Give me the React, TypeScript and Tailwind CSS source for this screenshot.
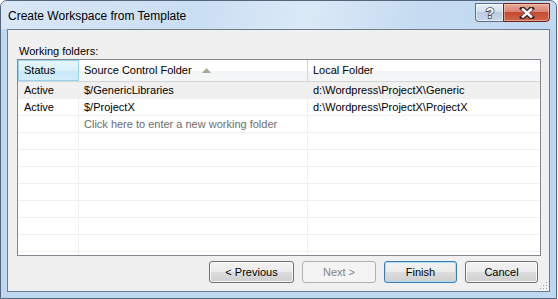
import React from 'react';

type Row = {
  status?: string;
  source?: string;
  local?: string;
  placeholder?: string;
  selected?: boolean;
};

const rows: Row[] = [
  { status: 'Active', source: '$/GenericLibraries', local: 'd:\\Wordpress\\ProjectX\\Generic', selected: true },
  { status: 'Active', source: '$/ProjectX', local: 'd:\\Wordpress\\ProjectX\\ProjectX' },
  { placeholder: 'Click here to enter a new working folder' },
  {},
  {},
  {},
  {},
  {},
  {},
  {},
  {},
];

const HelpButton = () => (
  <div className="w-[28px] h-[19px] rounded-bl-[4px] border border-[#5f6e80] border-r-0 bg-[linear-gradient(#e9eff6_0%,#d3dfec_45%,#b9cbe0_50%,#c9d9ea_100%)] flex items-center justify-center shadow-[inset_0_0_0_1px_rgba(255,255,255,0.55)]">
    <svg width="12" height="14" viewBox="0 0 12 14">
      <text
        x="6"
        y="12"
        textAnchor="middle"
        fontFamily="Liberation Sans, Arial, sans-serif"
        fontWeight="700"
        fontSize="14"
        fill="#ffffff"
        stroke="#3b4756"
        strokeWidth="1.6"
        paintOrder="stroke"
      >
        ?
      </text>
    </svg>
  </div>
);

const CloseButton = () => (
  <div className="w-[47px] h-[19px] rounded-br-[4px] border border-[#6b2519] bg-[linear-gradient(#e9a99a_0%,#d98574_45%,#c44a31_50%,#d0654a_100%)] flex items-center justify-center shadow-[inset_0_0_0_1px_rgba(255,220,210,0.45)]">
    <svg width="16" height="12" viewBox="0 0 16 12">
      <path
        d="M3 1.5 L8 5 L13 1.5 M3 10.5 L8 7 L13 10.5 M5 2.5 L11 9.5 M11 2.5 L5 9.5"
        stroke="#3a2a2a"
        strokeWidth="4.2"
        strokeLinecap="square"
        fill="none"
      />
      <path
        d="M4 2.5 L12 9.5 M12 2.5 L4 9.5"
        stroke="#ffffff"
        strokeWidth="2.4"
        strokeLinecap="square"
        fill="none"
      />
    </svg>
  </div>
);

const Button = ({
  label,
  width,
  variant = 'normal',
}: {
  label: string;
  width: string;
  variant?: 'normal' | 'default' | 'disabled';
}) => {
  const styles =
    variant === 'disabled'
      ? 'border-[#adb2b5] bg-[#f4f4f4] text-[#838383]'
      : variant === 'default'
        ? 'border-[#3c7fb1] bg-[linear-gradient(#f2f2f2_0%,#ebebeb_50%,#dddddd_50%,#cfcfcf_100%)] text-black shadow-[inset_0_0_0_1px_#a6def6]'
        : 'border-[#707070] bg-[linear-gradient(#f2f2f2_0%,#ebebeb_50%,#dddddd_50%,#cfcfcf_100%)] text-black shadow-[inset_0_0_0_1px_rgba(255,255,255,0.8)]';
  return (
    <div className={`${width} h-[22px] rounded-[3px] border flex items-center justify-center text-[11px] ${styles}`}>
      {label}
    </div>
  );
};

const SizeGrip = () => (
  <svg width="8" height="8" viewBox="0 0 8 8">
    {[
      [6, 0],
      [3, 3],
      [6, 3],
      [0, 6],
      [3, 6],
      [6, 6],
    ].map(([x, y], i) => (
      <g key={i}>
        <rect x={x + 1} y={y + 1} width="1" height="1" fill="#ffffff" />
        <rect x={x} y={y} width="1" height="1" fill="#a0a0a0" />
      </g>
    ))}
  </svg>
);

export default function App() {
  return (
    <div className="w-[558px] h-[299px] bg-white font-['Liberation_Sans',Arial,sans-serif] text-[11px] text-black overflow-hidden">
      <div className="w-[557px] h-[299px] rounded-t-[7px] border border-[#55667a] bg-[#bfd8f1] flex flex-col px-[6px] pb-[6px]">
        {/* title bar */}
        <div className="h-[28px] -mx-[6px] px-[6px] rounded-t-[6px] bg-[linear-gradient(100deg,#d9e7f6_0%,#cadef2_35%,#dbe9f7_55%,#c6dbf1_75%,#c0d8f1_100%)] flex items-start justify-between">
          <div className="pt-[8px] pl-[1px] text-[12px] leading-[15px] text-black">Create Workspace from Template</div>
          <div className="flex pt-[2px]">
            <HelpButton />
            <CloseButton />
          </div>
        </div>

        {/* client area */}
        <div className="flex-1 border border-[#6e7d8d] bg-[#f0f0f0] flex flex-col pl-[9px] pr-[8px] pt-[13px] relative">
          <div className="h-[16px] leading-[16px] pl-[2px]">Working folders:</div>

          <div className="h-[197px] border border-[#828790] bg-white flex flex-col overflow-hidden">
            {/* header */}
            <div className="h-[22px] shrink-0 flex border-b border-[#d5d5d5] bg-[linear-gradient(#ffffff_0%,#ffffff_50%,#f3f4f6_55%,#f5f6f7_100%)]">
              <div className="w-[61px] border border-[#96d3f1] bg-[linear-gradient(#e6f5fc_0%,#d9f0fb_50%,#c8e9f9_55%,#d3edfa_100%)] flex items-center pl-[5px]">
                Status
              </div>
              <div className="w-[229px] border-r border-[#d5d5d5] flex items-center pl-[5px]">
                <span>Source Control Folder</span>
                <svg className="ml-[10px]" width="9" height="5" viewBox="0 0 9 5">
                  <path d="M4.5 0 L9 5 L0 5 Z" fill="#a9a792" />
                </svg>
              </div>
              <div className="flex-1 flex items-center pl-[5px]">Local Folder</div>
            </div>

            {/* rows */}
            {rows.map((r, i) => (
              <div
                key={i}
                className={`h-[17px] shrink-0 flex border-b border-[#f0f0f0] ${r.selected ? 'bg-[#f0f0f0]' : ''}`}
              >
                <div className="w-[61px] border-r border-[#f0f0f0] flex items-center pl-[6px]">{r.status}</div>
                <div className="w-[229px] border-r border-[#f0f0f0] flex items-center pl-[5px] whitespace-nowrap">
                  {r.placeholder ? <span className="text-[#6d6d6d]">{r.placeholder}</span> : r.source}
                </div>
                <div className="flex-1 flex items-center pl-[5px] whitespace-nowrap">{r.local}</div>
              </div>
            ))}
          </div>

          <div className="mt-[5px] flex justify-end gap-[8px] pr-[3px]">
            <Button label="< Previous" width="w-[85px]" />
            <Button label="Next >" width="w-[74px]" variant="disabled" />
            <Button label="Finish" width="w-[73px]" variant="default" />
            <Button label="Cancel" width="w-[73px]" />
          </div>

          <div className="absolute right-[1px] bottom-[1px] flex">
            <SizeGrip />
          </div>
        </div>
      </div>
    </div>
  );
}
